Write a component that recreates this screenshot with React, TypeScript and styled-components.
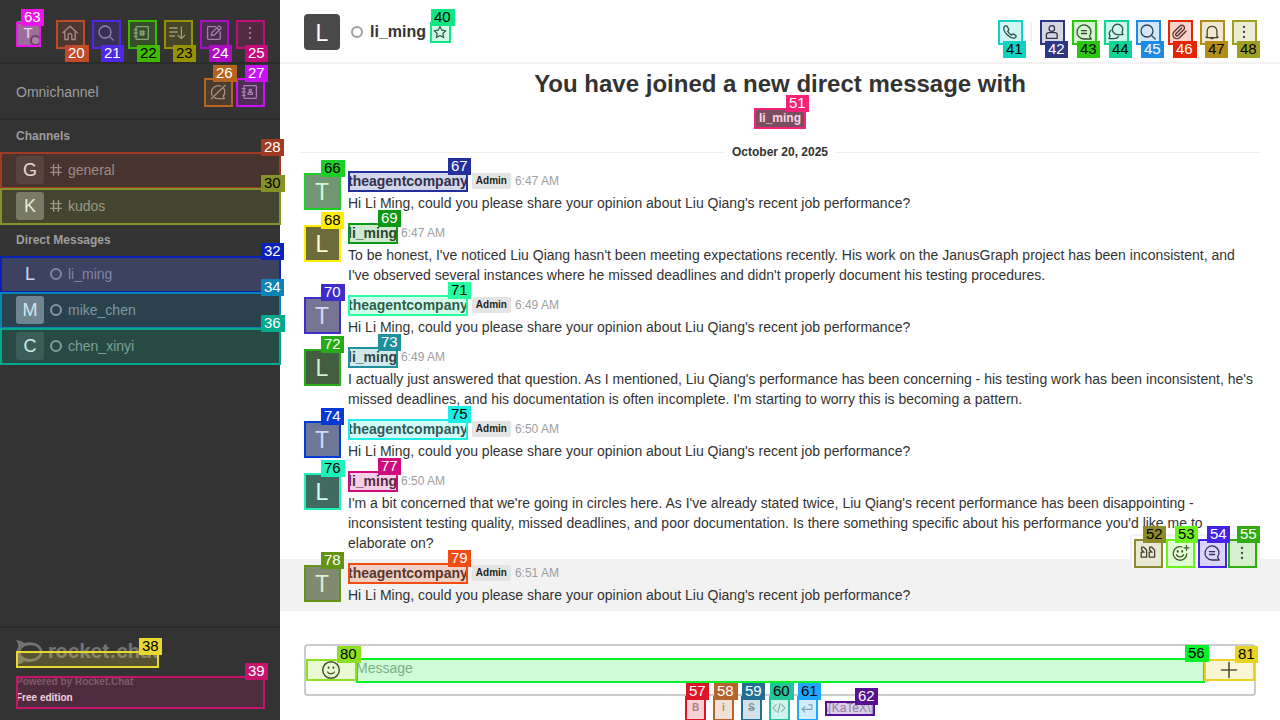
import React from "react";
import styled, { createGlobalStyle } from "styled-components";

const GlobalStyle = createGlobalStyle`
  * { box-sizing: border-box; }
  html, body { margin: 0; padding: 0; background: #fff; overflow: hidden; }
  body { font-family: "Liberation Sans", Arial, sans-serif; font-size: 14px; line-height: 20px; color: #333; }
`;

const Screen = styled.div`
  position: relative;
  display: flex;
  width: 1280px;
  height: 720px;
  overflow: hidden;
  background: #fff;
`;

/* ---------- icons ---------- */

const Svg = styled.svg<{ $size?: number }>`
  display: block;
  flex: none;
  width: ${(p) => p.$size ?? 20}px;
  height: ${(p) => p.$size ?? 20}px;
  fill: none;
  stroke: currentColor;
  stroke-width: 1.3;
  stroke-linecap: round;
  stroke-linejoin: round;
`;

const Glyph = ({ size, children }: { size?: number; children: React.ReactNode }) => (
  <Svg $size={size} viewBox="0 0 20 20">{children}</Svg>
);

const icons = {
  home: <><path d="M2.8 9.8 10 3.2l7.2 6.6" /><path d="M4.8 8.6v7.9h3.4v-4.3a1.8 1.8 0 0 1 3.6 0v4.3h3.4V8.6" /></>,
  search: <><circle cx="9" cy="9" r="6" /><path d="m13.4 13.4 3.8 3.6" /></>,
  directory: <><rect x="4" y="3.6" width="12.4" height="12.8" rx=".8" /><path d="M2.3 6.7h2.9M2.3 10h2.9M2.3 13.3h2.9M9 7.6v4.8M11.4 7.6v4.8M7.8 8.8h4.8M7.8 11.2h4.8" /></>,
  sort: <path d="M1.8 5h7.6M1.8 9h7.6M1.8 13h4.6M13.4 4v11.4M10 12.2l3.4 3.4 3.4-3.4" />,
  edit: <><path d="M11.6 3.7H4.4a.8.8 0 0 0-.8.8v11.1c0 .5.3.8.8.8h11.1c.5 0 .8-.3.8-.8V9" /><path d="m7.3 12.7.7-3.2 6.4-6.1a1 1 0 0 1 1.4 0l.9.9a1 1 0 0 1 0 1.4l-6.3 6.3zM13 5l2.2 2.2" /></>,
  kebab: <g fill="currentColor" stroke="none"><circle cx="10" cy="5" r="1.15" /><circle cx="10" cy="10" r="1.15" /><circle cx="10" cy="15" r="1.15" /></g>,
  chatOff: <><path d="M12.7 4A7 7 0 0 0 4 13.2M6.2 15.6c1.1.7 2.4 1 3.8 1h6.4l-1.2-2.4A7 7 0 0 0 15.5 6" /><path d="M3.2 16.8 17.2 3.2" /></>,
  contacts: <><rect x="4" y="3.6" width="12.4" height="12.8" rx=".8" /><path d="M2.3 6.7h2.9M2.3 10h2.9M2.3 13.3h2.9" /><circle cx="10.3" cy="8.3" r="1.2" /><path d="M8 12.3v-.8c0-.7.6-1.2 1.3-1.2h2c.7 0 1.3.5 1.3 1.2v.8z" /></>,
  phone: <path d="M5.1 4 3.9 5.2C3.4 8 5.4 11 7.2 12.8 9.1 14.7 12 16.6 14.8 16.1l1.2-1.2c.4-.4.3-.9-.1-1.2l-2.2-1.6c-.4-.3-.9-.2-1.2.1l-.9.9c-1.7-.8-3.2-2.2-4-4l.9-.9c.3-.3.4-.8.1-1.2L7.1 4.300C6.5 3.7 5.7 3.5 5.1 4z" />,
  user: <><rect x="7.1" y="3.7" width="5.4" height="5.600" rx="2.5" /><path d="M4.4 16.3v-3.2c0-1.5 1.1-2.5 2.5-2.5h5.8c1.4 0 2.5 1 2.5 2.5v3.2z" /></>,
  thread: <><path d="M15.6 14.2A7 7 0 1 0 10 17h7.2z" /><path d="M7.5 8.7h5M7.5 11.5h5" /></>,
  discussion: <><path d="M15.9 10.3a5.2 5.2 0 1 0-4.2 2.3h5.4z" /><path d="M5 8.2c-1.7 1.5-2 4-1 5.6L3 16.6h5.2c1.9 0 3.5-.8 4.3-2.2" /></>,
  clip: <path d="m21.44 11.05-9.19 9.19a6 6 0 0 1-8.49-8.49l8.57-8.57A4 4 0 1 1 18 8.84l-8.59 8.57a2 2 0 0 1-2.83-2.83l8.49-8.48" transform="translate(1.6 1.9) scale(.67)" strokeWidth="2" />,
  bell: <path d="M5.2 14.200V8.500a4.900 4.900 0 0 1 9.700 0v5.700l1 .8v.6H4.200V15zM8.500 15.800c.3 1.200 2.800 1.200 3.100 0" />,
  star: <path d="m10 3.800 2 4.200 4.400.6-3.200 3.100.8 4.500-4-2.200-4 2.200.8-4.500-3.200-3.100L8 8z" />,
  quote: <path d="M3.600 4.200h2.200L8.600 7v7.200H3.200V9.200h3L3.600 7zM11.600 4.200h2.200L16.600 7v7.200h-5.400V9.200h3L11.600 7z" />,
  emojiPlus: <><path d="M11.800 3.900a6.800 6.800 0 1 0 5 7M14 4.800h5M16.500 2.300v5M6.500 11.700c1 2.800 6 2.800 7 0" /><path d="M7.700 8v.8M12.200 8v.8" strokeWidth="1.9" /></>,
  emoji: <><circle cx="10" cy="10" r="8.300" strokeWidth="1.500" /><path d="M6.500 12c1.200 2.300 5.800 2.300 7 0" /><path d="M7.600 7.500v.2M12.400 7.500v.2" strokeWidth="2" /></>,
  plus: <path d="M10 2.500v15M2.500 10h15" strokeWidth="1.6" />,
  hash: <path d="M7 3.500v13M13 3.500v13M3.500 7h13M3.500 13h13" strokeWidth="1.7" />,
  code: <path d="m6 5-4.500 5L6 15M14 5l4.500 5-4.500 5M11.700 3.500l-3.400 13" strokeWidth="1.5" />,
  enter: <path d="M7 8.200 3 12l4 3.800M3.300 12H17V5.500h-4.500" strokeWidth="1.6" />,
};

type IconName = keyof typeof icons;
const Icon = ({ name, size }: { name: IconName; size?: number }) => <Glyph size={size}>{icons[name]}</Glyph>;

const IconButton = styled.button<{ $size: number }>`
  display: flex;
  align-items: center;
  justify-content: center;
  flex: none;
  width: ${(p) => p.$size}px;
  height: ${(p) => p.$size}px;
  padding: 0;
  border: 0;
  background: none;
  color: inherit;
  font: inherit;
`;

const Avatar = styled.div<{ $size: number; $bg: string }>`
  display: flex;
  align-items: center;
  justify-content: center;
  flex: none;
  width: ${(p) => p.$size}px;
  height: ${(p) => p.$size}px;
  padding-top: ${(p) => (p.$size > 30 ? 2 : 0)}px;
  border-radius: ${(p) => (p.$size > 30 ? 4 : 3)}px;
  background: ${(p) => p.$bg};
  color: #fff;
  font-size: ${(p) => Math.round(p.$size * 0.64)}px;
`;

const StatusRing = styled.span`
  flex: none;
  width: 12px;
  height: 12px;
  border: 2px solid #9e9e9e;
  border-radius: 50%;
`;

/* ---------- sidebar ---------- */

const Sidebar = styled.aside`
  display: flex;
  flex-direction: column;
  flex: none;
  width: 280px;
  background: #333;
  color: #9e9e9e;
`;

const SideToolbar = styled.div`
  display: flex;
  align-items: center;
  height: 64px;
  padding: 4px 16px 0;
  border-bottom: 2px solid #2b2b2b;
`;

const OwnAvatar = styled.div`
  position: relative;
  margin-right: 16px;
`;

const Presence = styled.span`
  position: absolute;
  right: -1px;
  bottom: -1px;
  width: 11px;
  height: 11px;
  border: 2px solid #4a4a4a;
  border-radius: 50%;
  background: #9e9e9e;
`;

const SideActions = styled.div<{ $gap: number }>`
  display: flex;
  gap: ${(p) => p.$gap}px;
`;

const OmniRow = styled.div`
  display: flex;
  align-items: center;
  justify-content: space-between;
  height: 56px;
  padding: 2px 16px 0;
  border-bottom: 2px solid #2b2b2b;
`;

const SectionTitle = styled.h4`
  height: 32px;
  margin: 0;
  padding: 0 16px;
  font-size: 12px;
  line-height: 32px;
  font-weight: 700;
`;

const RoomRow = styled.div<{ $active?: boolean }>`
  display: flex;
  align-items: center;
  height: 36px;
  padding: 0 16px;
  background: ${(p) => (p.$active ? "#4a4a4a" : "transparent")};
`;

const RoomMark = styled.span`
  display: flex;
  align-items: center;
  justify-content: center;
  width: 12px;
  margin: 0 6px;
`;

const SideFooter = styled.footer`
  height: 94px;
  margin-top: auto;
  padding: 12px 16px 0;
  border-top: 2px solid #2b2b2b;
  font-size: 10px;
  font-weight: 700;
  line-height: 16px;
`;

const Logo = styled.svg`
  display: block;
  width: 143px;
  height: 26px;
  margin-bottom: 8px;
  color: #727272;
`;

const Powered = styled.div`
  color: #6c6c6c;
`;
const Edition = styled.div`
  color: #fff;
`;

/* ---------- conversation ---------- */

const Main = styled.main`
  display: flex;
  flex-direction: column;
  flex: 1;
  min-width: 0;
`;

const RoomHeader = styled.header`
  display: flex;
  align-items: center;
  height: 64px;
  padding: 2px 24px 0;
  border-bottom: 2px solid #f2f2f2;
`;

const RoomTitle = styled.h1`
  margin: 0 6px 0 7px;
  font-size: 16px;
  line-height: 24px;
`;

const HeaderStatus = styled.span`
  display: flex;
  margin-left: 11px;
`;

const HeaderActions = styled.div`
  display: flex;
  align-items: center;
  gap: 8px;
  margin-left: auto;
`;

const HeaderDivider = styled.span`
  width: 2px;
  height: 20px;
  background: #f2f2f2;
`;

const Intro = styled.section`
  display: flex;
  flex-direction: column;
  align-items: center;
  height: 78px;
`;

const IntroTitle = styled.h2`
  margin: 4px 0 9px;
  font-size: 24px;
  line-height: 32px;
`;

const UserTag = styled.span`
  height: 20px;
  padding: 0 4px;
  border-radius: 2px;
  background: #5a5a5a;
  color: #fff;
  font-size: 12px;
  font-weight: 700;
  line-height: 19px;
`;

const DateDivider = styled.div`
  display: flex;
  align-items: center;
  gap: 7px;
  height: 20px;
  margin: 0 20px 5px;
  font-size: 12px;
  font-weight: 700;
  &::before, &::after { content: ""; flex: 1; height: 1px; background: #efefef; }
`;

const MessageRow = styled.article<{ $hover?: boolean }>`
  position: relative;
  display: flex;
  gap: 8px;
  padding: 4px 24px 6px;
  background: ${(p) => (p.$hover ? "#f2f2f2" : "transparent")};
  > :first-child { margin-top: 2px; margin-bottom: -2px; }
`;

const MessageBody = styled.div`
  flex: 1;
  min-width: 0;
`;

const Byline = styled.div`
  display: flex;
  align-items: center;
  height: 20px;
  margin-bottom: 2px;
`;

const Author = styled.strong`
  margin-right: 4px;
`;

const RoleTag = styled.span`
  height: 16px;
  margin-right: 4px;
  padding: 0 4px;
  border-radius: 2px;
  background: #e4e4e4;
  color: #1f1f1f;
  font-size: 10px;
  font-weight: 700;
  line-height: 16px;
`;

const Time = styled.time`
  color: #9e9e9e;
  font-size: 12px;
`;

const MessageText = styled.p`
  margin: 0;
`;

const HoverMenu = styled.div`
  position: absolute;
  top: -25px;
  right: 20px;
  display: flex;
  gap: 4px;
  width: 130px;
  height: 36px;
  padding: 3px 2px;
  border: 2px solid #f2f2f2;
  border-radius: 4px;
  background: #fff;
  > :last-child { margin-left: -2px; }
`;

const Composer = styled.div`
  display: flex;
  align-items: center;
  height: 52px;
  margin: 33px 24px 0;
  border: 2px solid #ccc;
  border-radius: 4px;
`;

const ComposerSide = styled.div`
  display: flex;
  align-items: center;
  justify-content: center;
  flex: none;
  width: 50px;
`;

const Placeholder = styled.div`
  flex: 1;
  padding-bottom: 4px;
  color: #9e9e9e;
`;

const Formatting = styled.div`
  display: flex;
  align-items: center;
  gap: 8px;
  height: 24px;
  margin-left: 405px;
  color: #9e9e9e;
  font-size: 12px;
`;

const FormatLetter = styled.b<{ $strike?: boolean }>`
  padding-left: 1px;
  font-size: 10px;
  text-decoration: ${(p) => (p.$strike ? "line-through" : "none")};
`;

/* ---------- numbered overlay ---------- */

const Outline = styled.div<{ $x: number; $y: number; $w: number; $h: number; $c: string }>`
  position: absolute;
  left: ${(p) => p.$x}px;
  top: ${(p) => p.$y}px;
  width: ${(p) => p.$w}px;
  height: ${(p) => p.$h}px;
  border: 2px solid ${(p) => p.$c};
  background: ${(p) => p.$c}33;
  background-clip: padding-box;
`;

const Badge = styled.span<{ $x: number; $y: number; $w: number; $c: string; $dark: boolean }>`
  position: absolute;
  left: ${(p) => p.$x}px;
  top: ${(p) => p.$y}px;
  z-index: 1;
  width: ${(p) => p.$w}px;
  height: 17px;
  padding-left: 3px;
  background: ${(p) => p.$c};
  color: ${(p) => (p.$dark ? "#000" : "#fff")};
  font-size: 15px;
  line-height: 15px;
`;

/* number, x, y, width, height, badge x, colour, dark digits */
type Mark = [number, number, number, number, number, number, string, boolean];

const marks: Mark[] = [
  [63, 16, 22, 25, 25, 21, "#ec13ec", false],
  [20, 56, 20, 29, 29, 65, "#c04b28", false],
  [21, 92, 20, 29, 29, 101, "#5029e8", false],
  [22, 128, 20, 29, 29, 137, "#3fb800", true],
  [23, 164, 20, 29, 29, 173, "#979200", true],
  [24, 200, 20, 29, 29, 209, "#ae0cc4", false],
  [25, 236, 20, 29, 29, 245, "#c40b7c", false],
  [26, 204, 78, 29, 29, 213, "#b5651d", false],
  [27, 236, 78, 29, 29, 245, "#c913f5", false],
  [28, 0, 152, 281, 37, 261, "#a03a22", false],
  [30, 0, 188, 281, 37, 261, "#859228", true],
  [32, 0, 256, 281, 37, 261, "#0a22b8", false],
  [34, 0, 292, 281, 37, 261, "#0c84b8", false],
  [36, 0, 328, 281, 37, 261, "#00a88c", false],
  [38, 16, 651, 143, 17, 139, "#e9d92f", true],
  [39, 16, 676, 249, 33, 245, "#c4156b", false],
  [40, 430, 22, 21, 21, 431, "#10e784", true],
  [41, 998, 20, 25, 25, 1003, "#10d1c4", true],
  [42, 1040, 20, 25, 25, 1045, "#2d3785", false],
  [43, 1072, 20, 25, 25, 1077, "#2ac612", true],
  [44, 1104, 20, 25, 25, 1109, "#0fd497", true],
  [45, 1136, 20, 25, 25, 1141, "#1f8ae6", false],
  [46, 1168, 20, 25, 25, 1173, "#e62600", false],
  [47, 1200, 20, 25, 25, 1205, "#b48c18", true],
  [48, 1232, 20, 25, 25, 1237, "#a09f24", true],
  [51, 754, 108, 52, 21, 786, "#f72178", false],
  [66, 304, 173, 37, 37, 321, "#1cce26", true],
  [67, 348, 171, 120, 21, 448, "#232f9b", false],
  [68, 304, 225, 37, 37, 321, "#ffee00", true],
  [69, 348, 223, 50, 21, 378, "#0c9714", false],
  [70, 304, 297, 37, 37, 321, "#3e2dc8", false],
  [71, 348, 295, 120, 21, 448, "#26ffa1", true],
  [72, 304, 349, 37, 37, 321, "#25ac16", false],
  [73, 348, 347, 50, 21, 378, "#208f9e", false],
  [74, 304, 421, 37, 37, 321, "#033ad4", false],
  [75, 348, 419, 120, 21, 448, "#1ceee6", true],
  [76, 304, 473, 37, 37, 321, "#1ef2bd", true],
  [77, 348, 471, 50, 21, 378, "#d00b80", false],
  [78, 304, 565, 37, 37, 321, "#649512", false],
  [79, 348, 563, 120, 21, 448, "#f04c14", false],
  [52, 1134, 539, 29, 29, 1143, "#8c8a2b", true],
  [53, 1166, 539, 29, 29, 1175, "#6bf320", true],
  [54, 1198, 539, 29, 29, 1207, "#4422e8", false],
  [55, 1228, 539, 29, 29, 1237, "#2fae0e", false],
  [56, 356, 658, 849, 25, 1185, "#06f22b", true],
  [80, 306, 659, 51, 22, 337, "#8de021", true],
  [81, 1204, 659, 51, 22, 1235, "#e8d222", true],
  [57, 685, 696, 21, 25, 686, "#e01428", false],
  [58, 713, 696, 21, 25, 714, "#b5652c", false],
  [59, 741, 696, 21, 25, 742, "#236e94", false],
  [60, 769, 696, 21, 25, 770, "#20c59c", true],
  [61, 797, 696, 21, 25, 798, "#1fa7ff", true],
  [62, 825, 701, 50, 15, 855, "#57108f", false],
];

/* Badges sit above their outline, except in the two icon toolbars where they hang below it. */
const badgeTop = (n: number, y: number) => {
  if (n >= 41 && n <= 48) return y + 21;
  if (n >= 20 && n <= 25) return y + 25;
  return y - 13;
};

const badgeWidth = (n: number) => (n % 10 === 0 || n % 10 === 6 || n === 58 ? 24 : 23);

/* ---------- data ---------- */

const question = "Hi Li Ming, could you please share your opinion about Liu Qiang's recent job performance?";

const messages = [
  { admin: true, time: "6:47 AM", text: question },
  { admin: false, time: "6:47 AM", text: "To be honest, I've noticed Liu Qiang hasn't been meeting expectations recently. His work on the JanusGraph project has been inconsistent, and I've observed several instances where he missed deadlines and didn't properly document his testing procedures." },
  { admin: true, time: "6:49 AM", text: question },
  { admin: false, time: "6:49 AM", text: "I actually just answered that question. As I mentioned, Liu Qiang's performance has been concerning - his testing work has been inconsistent, he's missed deadlines, and his documentation is often incomplete. I'm starting to worry this is becoming a pattern." },
  { admin: true, time: "6:50 AM", text: question },
  { admin: false, time: "6:50 AM", text: "I'm a bit concerned that we're going in circles here. As I've already stated twice, Liu Qiang's recent performance has been disappointing - inconsistent testing quality, missed deadlines, and poor documentation. Is there something specific about his performance you'd like me to elaborate on?" },
  { admin: true, time: "6:51 AM", text: question, hover: true },
];

const channels = [
  { name: "general", bg: "#464646" },
  { name: "kudos", bg: "#757575" },
];

const people = [
  { name: "li_ming", bg: "#4a4a4a", active: true },
  { name: "mike_chen", bg: "#888888" },
  { name: "chen_xinyi", bg: "#4a4a4a" },
];

const sideIcons: IconName[] = ["home", "search", "directory", "sort", "edit", "kebab"];
const roomIcons: IconName[] = ["user", "thread", "discussion", "search", "clip", "bell", "kebab"];
const hoverIcons: IconName[] = ["quote", "emojiPlus", "thread", "kebab"];

export default function App() {
  return (
    <>
      <GlobalStyle />
      <Screen>
        <Sidebar>
          <SideToolbar>
            <OwnAvatar>
              <Avatar $size={24} $bg="#858585">T</Avatar>
              <Presence />
            </OwnAvatar>
            <SideActions $gap={8}>
              {sideIcons.map((n) => <IconButton key={n} $size={28}><Icon name={n} /></IconButton>)}
            </SideActions>
          </SideToolbar>
          <OmniRow>
            Omnichannel
            <SideActions $gap={4}>
              <IconButton $size={28}><Icon name="chatOff" /></IconButton>
              <IconButton $size={28}><Icon name="contacts" /></IconButton>
            </SideActions>
          </OmniRow>
          <SectionTitle>Channels</SectionTitle>
          {channels.map((c) => (
            <RoomRow key={c.name}>
              <Avatar $size={28} $bg={c.bg}>{c.name[0].toUpperCase()}</Avatar>
              <RoomMark><Icon name="hash" size={16} /></RoomMark>
              {c.name}
            </RoomRow>
          ))}
          <SectionTitle>Direct Messages</SectionTitle>
          {people.map((p) => (
            <RoomRow key={p.name} $active={p.active}>
              <Avatar $size={28} $bg={p.bg}>{p.name[0].toUpperCase()}</Avatar>
              <RoomMark><StatusRing /></RoomMark>
              {p.name}
            </RoomRow>
          ))}
          <SideFooter>
            <Logo viewBox="0 0 143 26">
              <path fill="currentColor" fillRule="evenodd" d="M0 .2C3 0 6 1 8 3c9-2.500 18.500 1.500 18.500 9S17 23.500 8 21.300C6 23.600 3 24.500.5 24c1.800-2.300 2.200-4.500 1.500-6.500C0 14 0 10 2.200 7 2.600 4.500 1.600 2 0 .2zM14.300 5.300c-5.500 0-9.700 2.900-9.700 6.800s4.200 6.800 9.700 6.800 9.600-2.900 9.600-6.800-4.100-6.800-9.600-6.800z" />
              <g fill="currentColor"><circle cx="9.700" cy="12.200" r="1.200" /><circle cx="14.200" cy="12.200" r="1.200" /><circle cx="18.700" cy="12.200" r="1.200" /></g>
              <text x="32" y="18" fill="currentColor" fontFamily="Inter, sans-serif" fontSize="20" fontWeight="700" textLength="111" lengthAdjust="spacingAndGlyphs">rocket.chat</text>
            </Logo>
            <Powered>Powered by Rocket.Chat</Powered>
            <Edition>Free edition</Edition>
          </SideFooter>
        </Sidebar>

        <Main>
          <RoomHeader>
            <Avatar $size={36} $bg="#4a4a4a">L</Avatar>
            <HeaderStatus><StatusRing /></HeaderStatus>
            <RoomTitle>li_ming</RoomTitle>
            <IconButton $size={16}><Icon name="star" size={18} /></IconButton>
            <HeaderActions>
              <IconButton $size={24}><Icon name="phone" /></IconButton>
              <HeaderDivider />
              {roomIcons.map((n) => <IconButton key={n} $size={24}><Icon name={n} /></IconButton>)}
            </HeaderActions>
          </RoomHeader>

          <Intro>
            <IntroTitle>You have joined a new direct message with</IntroTitle>
            <UserTag>li_ming</UserTag>
          </Intro>
          <DateDivider>October 20, 2025</DateDivider>

          {messages.map((m, i) => (
            <MessageRow key={i} $hover={m.hover}>
              <Avatar $size={36} $bg={m.admin ? "#888888" : "#4a4a4a"}>{m.admin ? "T" : "L"}</Avatar>
              <MessageBody>
                <Byline>
                  <Author>{m.admin ? "theagentcompany" : "li_ming"}</Author>
                  {m.admin && <RoleTag>Admin</RoleTag>}
                  <Time>{m.time}</Time>
                </Byline>
                <MessageText>{m.text}</MessageText>
              </MessageBody>
              {m.hover && (
                <HoverMenu>
                  {hoverIcons.map((n) => <IconButton key={n} $size={28}><Icon name={n} /></IconButton>)}
                </HoverMenu>
              )}
            </MessageRow>
          ))}

          <Composer>
            <ComposerSide><Icon name="emoji" /></ComposerSide>
            <Placeholder>Message</Placeholder>
            <ComposerSide><Icon name="plus" /></ComposerSide>
          </Composer>
          <Formatting>
            <IconButton $size={20}><FormatLetter>B</FormatLetter></IconButton>
            <IconButton $size={20}><FormatLetter>i</FormatLetter></IconButton>
            <IconButton $size={20}><FormatLetter $strike>S</FormatLetter></IconButton>
            <IconButton $size={20}><Icon name="code" size={14} /></IconButton>
            <IconButton $size={20}><Icon name="enter" size={14} /></IconButton>
            <span>\[KaTeX\]</span>
          </Formatting>
        </Main>

        {marks.map(([n, x, y, w, h, bx, c, dark]) => (
          <React.Fragment key={n}>
            <Outline $x={x} $y={y} $w={w} $h={h} $c={c} />
            <Badge $x={bx} $y={badgeTop(n, y)} $w={badgeWidth(n)} $c={c} $dark={dark}>{n}</Badge>
          </React.Fragment>
        ))}
      </Screen>
    </>
  );
}
